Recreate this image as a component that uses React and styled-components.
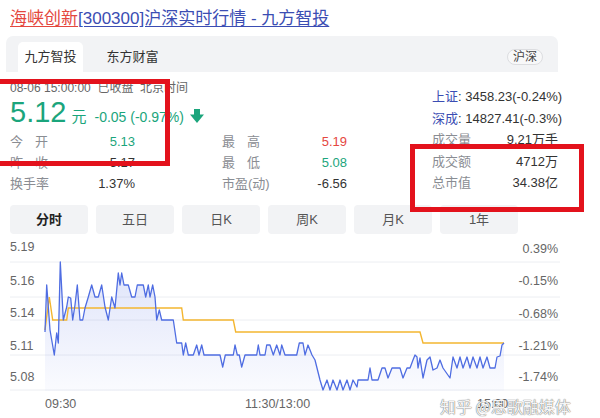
import React from 'react'
import styled, { createGlobalStyle } from 'styled-components'

const GlobalStyle = createGlobalStyle`
  body {
    margin: 0;
    background: #fff;
    font-family: "Liberation Sans", "Noto Sans CJK SC", sans-serif;
  }
`

const GREEN = '#1ba57c'
const RED = '#e5473f'

const Page = styled.div`
  position: relative;
  width: 600px;
  height: 418px;
  overflow: hidden;
  background: #fff;
  color: #333;
`

const Title = styled.div`
  padding: 9px 0 0 10px;
  font-size: 17px;
  line-height: 20px;
  white-space: nowrap;
`

const TitleLink = styled.a`
  color: ${({ red }) => red ? '#e4473e' : '#3b4db3'};
  text-decoration: underline;
  text-underline-offset: 2px;
`

const SourceBar = styled.div`
  display: flex;
  align-items: flex-end;
  height: 36px;
  margin: 7px 42px 0 6px;
  padding-left: 12px;
  background: #f2f3f5;
  border-radius: 7px 7px 0 0;
`

const SourceTab = styled.div`
  height: 30px;
  line-height: 30px;
  padding: 0 6.5px;
  margin-right: 17px;
  font-size: 13px;
  color: #333;
  background: ${({ active }) => active ? '#fff' : 'transparent'};
  border-radius: 5px 5px 0 0;
`

const Pill = styled.div`
  margin: 0 15px 7px auto;
  height: 16px;
  padding: 0 5px;
  line-height: 15px;
  font-size: 12px;
  color: #444;
  background: #f8f8f9;
  border: 1px solid #dcdde0;
  border-radius: 9px;
  box-sizing: border-box;
`

const Info = styled.div`
  display: flex;
  height: 133px;
  padding: 0 42px 0 10px;
`

const Left = styled.div`
  flex: 1;
  padding-top: 8px;
`

const DateLine = styled.div`
  font-size: 12px;
  line-height: 16px;
  color: #666;
  white-space: nowrap;
`

const PriceRow = styled.div`
  display: flex;
  align-items: baseline;
  height: 32px;
  line-height: 32px;
  color: ${GREEN};
`

const Price = styled.span`
  font-size: 29px;
`

const Unit = styled.span`
  margin-left: 5px;
  font-size: 15px;
`

const Change = styled.span`
  margin-left: 8px;
  font-size: 14px;
`

const ArrowBox = styled.span`
  align-self: flex-end;
  margin: 0 0 5px 6px;
  display: flex;
`

const Stats = styled.div`
  display: grid;
  grid-template-columns: 40px 85px 87px 40px 85px;
  grid-auto-rows: 21px;
  margin-top: 3px;
  font-size: 13px;
  line-height: 21px;
`

const Label = styled.span`
  color: #8a8d93;
  white-space: nowrap;
  text-align-last: ${({ spread }) => spread ? 'justify' : 'auto'};
  width: ${({ spread }) => spread ? '38px' : 'auto'};
`

const Value = styled.span`
  text-align: right;
  white-space: nowrap;
  color: ${({ tone }) => tone === 'up' ? RED : tone === 'down' ? GREEN : '#333'};
`

const Right = styled.div`
  width: 126px;
  padding-top: 14px;
  font-size: 13px;
`

const IndexRow = styled.div`
  height: 21.5px;
  line-height: 21.5px;
  text-align: right;
  white-space: nowrap;
  color: #333;
`

const IndexName = styled.span`
  color: #3b4db3;
`

const KVRow = styled.div`
  display: flex;
  justify-content: space-between;
  height: 21.5px;
  line-height: 21.5px;
  white-space: nowrap;
`

const Periods = styled.div`
  display: grid;
  grid-template-columns: repeat(6, 78px);
  gap: 8px;
  height: 29px;
  margin-left: 10px;
`

const Period = styled.div`
  background: #f2f3f5;
  border-radius: 4px;
  font-size: 13px;
  line-height: 29px;
  text-align: center;
  color: ${({ active }) => active ? '#222' : '#555'};
  font-weight: ${({ active }) => active ? 700 : 400};
`

const ChartWrap = styled.div`
  position: relative;
  height: 178px;
  margin-top: 6px;
`

const Watermark = styled.div`
  position: absolute;
  left: 440px;
  top: 156px;
  font-size: 16px;
  line-height: 20px;
  color: rgba(255, 255, 255, 0.95);
  text-shadow: 0 0 1px #666, 0 0 1px #888;
  white-space: nowrap;
  font-family: "Noto Sans CJK SC", sans-serif;
`

const Mark = styled.div`
  position: absolute;
  left: ${({ x }) => x}px;
  top: ${({ y }) => y}px;
  width: ${({ w }) => w}px;
  height: ${({ h }) => h}px;
  border: 5px solid #e3121c;
  box-sizing: border-box;
  pointer-events: none;
`

const blue = [
  [45,332],[46.7,285],[50,330],[54.3,355],[56.7,333],[58.3,343],[60.3,262],[63.3,320],[66.7,307],[68.3,297],
  [70.7,298],[72.7,320],[75,305],[77.3,285],[80,320],[82.7,320],[85,308],[88.3,297],[91.7,285],[95,297],
  [98.3,297],[101.7,285],[105,307],[108.3,320],[111.7,297],[115,308],[118.3,273],[120,285],[121.7,273],[124,285],
  [128.3,285],[131.7,297],[135,297],[137.3,285],[143.3,285],[145.7,297],[148.3,285],[150,297],[152.7,285],[155,297],
  [156.7,320],[159.3,310],[161.7,320],[173.3,320],[176.7,343],[181.7,343],[183.3,355],[185.7,343],[188.3,355],[193.3,355],
  [196.7,345],[199,355],[201.7,345],[204,355],[220,355],[222.7,367],[225.3,355],[233.3,355],[235,345],[237.3,355],
  [239.3,355],[241.7,367],[245,355],[256.7,355],[258.3,345],[260,355],[265,355],[266.7,345],[270,345],[273.3,355],
  [276.7,345],[280,355],[281.7,345],[285,355],[296.7,355],[299.3,343],[303,343],[305,355],[308,345],[312,355],
  [315,360],[320,380],[323,390],[327,380],[330,390],[333,380],[337,390],[340,380],[343,390],[347,380],
  [350,390],[353,380],[357,387],[358,380],[368,380],[370,368],[372,380],[378,380],[382,368],[385,368],
  [388,378],[392,368],[400,368],[403,378],[407,368],[410,368],[413,360],[415,355],[417,357],[418,368],
  [420,358],[423,378],[427,360],[430,357],[433,370],[437,368],[440,360],[443,368],[450,378],[453,357],
  [457,368],[460,357],[463,368],[467,357],[470,368],[473,357],[477,368],[480,357],[483,368],[487,357],
  [490,368],[495,368],[497,357],[500,356],[502,345],[504,343],
]

const avg = [
  [45,330],[49.3,297],[52.7,320],[66.7,320],[68.3,308],[181.7,308],[183.3,320],[233.3,320],[235.7,332],
  [420,332],[423,343],[504,343],
]

const toPath = pts => pts.map(([x, y], i) => `${i ? 'L' : 'M'}${x} ${y}`).join(' ')

const gridLines = [262, 297, 320, 355, 390]
const leftTicks = [['5.19', 248], ['5.16', 282], ['5.14', 314], ['5.11', 347], ['5.08', 378]]
const rightTicks = [['0.39%', 250], ['-0.15%', 282], ['-0.68%', 315], ['-1.21%', 347], ['-1.74%', 378]]
const timeTicks = [['09:30', 45], ['11:30/13:00', 245], ['15:00', 477]]

// fat down arrow next to the change
const DownArrow = () =>
  <svg width="14" height="14" viewBox="0 0 14 14">
    <rect x="4" y="0" width="6" height="7" fill={GREEN} />
    <path d="M0 5.5 L14 5.5 L7 14 Z" fill={GREEN} />
  </svg>

const Chart = () =>
  <svg width="600" height="178" viewBox="0 240 600 178" style={{ display: 'block' }}>
    <defs>
      <linearGradient id="area" x1="0" y1="0" x2="0" y2="1">
        <stop offset="0" stopColor="#5a74e6" stopOpacity="0.2" />
        <stop offset="1" stopColor="#5a74e6" stopOpacity="0.03" />
      </linearGradient>
    </defs>
    {gridLines.map(y => <line key={y} x1="10" x2="560" y1={y} y2={y} stroke="#eceef2" strokeWidth="1" />)}
    <path d={`${toPath(blue)} L504 391 L45 391 Z`} fill="url(#area)" />
    <path d={toPath(avg)} fill="none" stroke="#f4b630" strokeWidth="1.4" />
    <path d={toPath(blue)} fill="none" stroke="#4f6de2" strokeWidth="1.3" strokeLinejoin="round" />
    <g fontFamily="Liberation Sans, sans-serif" fontSize="12.5" fill="#666">
      {leftTicks.map(([t, y]) => <text key={t} x="10" y={y} dominantBaseline="middle">{t}</text>)}
      {rightTicks.map(([t, y]) => <text key={t} x="558" y={y} textAnchor="end" dominantBaseline="middle">{t}</text>)}
      {timeTicks.map(([t, x]) => <text key={t} x={x} y="405" dominantBaseline="middle">{t}</text>)}
    </g>
  </svg>

const stats = [
  { l: '今 开', spread: true, v: '5.13', tone: 'down', l2: '最 高', v2: '5.19', tone2: 'up' },
  { l: '昨 收', spread: true, v: '5.17', l2: '最 低', v2: '5.08', tone2: 'down' },
  { l: '换手率', v: '1.37%', l2: '市盈(动)', v2: '-6.56' },
]

const App = () =>
  <Page>
    <GlobalStyle />
    <Title>
      <TitleLink red>海峡创新</TitleLink><TitleLink>[300300]沪深实时行情 - 九方智投</TitleLink>
    </Title>
    <SourceBar>
      <SourceTab active>九方智投</SourceTab>
      <SourceTab>东方财富</SourceTab>
      <Pill>沪深</Pill>
    </SourceBar>
    <Info>
      <Left>
        <DateLine>08-06 15:00:00 &nbsp;已收盘 &nbsp;北京时间</DateLine>
        <PriceRow>
          <Price>5.12</Price>
          <Unit>元</Unit>
          <Change>-0.05 (-0.97%)</Change>
          <ArrowBox><DownArrow /></ArrowBox>
        </PriceRow>
        <Stats>
          {stats.map((s, i) =>
            <React.Fragment key={i}>
              <Label spread={s.spread}>{s.l}</Label>
              <Value tone={s.tone}>{s.v}</Value>
              <span />
              <Label spread>{s.l2}</Label>
              <Value tone={s.tone2}>{s.v2}</Value>
            </React.Fragment>)}
        </Stats>
      </Left>
      <Right>
        <IndexRow><IndexName>上证</IndexName>: 3458.23(-0.24%)</IndexRow>
        <IndexRow><IndexName>深成</IndexName>: 14827.41(-0.3%)</IndexRow>
        <KVRow><Label>成交量</Label><Value>9.21万手</Value></KVRow>
        <KVRow><Label>成交额</Label><Value>4712万</Value></KVRow>
        <KVRow><Label>总市值</Label><Value>34.38亿</Value></KVRow>
      </Right>
    </Info>
    <Periods>
      {['分时', '五日', '日K', '周K', '月K', '1年'].map((p, i) =>
        <Period key={p} active={i === 0}>{p}</Period>)}
    </Periods>
    <ChartWrap>
      <Chart />
      <Watermark>知乎 @恩歌融媒体</Watermark>
    </ChartWrap>
    <Mark x={-5} y={79} w={175} h={87} />
    <Mark x={410} y={144} w={174} h={68} />
  </Page>

export default App
